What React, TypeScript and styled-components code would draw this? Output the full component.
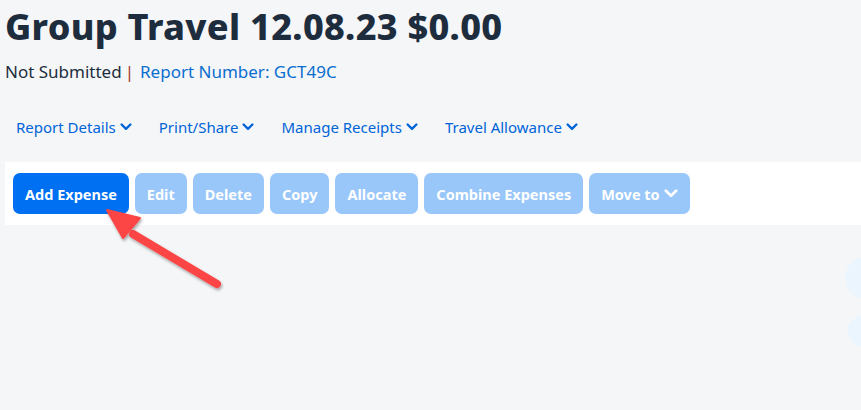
import styled, { createGlobalStyle } from 'styled-components'

const GlobalStyle = createGlobalStyle`
  html, body {
    margin: 0;
    padding: 0;
    background: #f5f6f7;
  }
  body {
    font-family: 'Noto Sans', 'Open Sans', Arial, sans-serif;
    overflow: hidden;
  }
`

const Page = styled.div`
  position: relative;
  width: 861px;
  height: 410px;
  overflow: hidden;
  background: #f5f6f7;
`

const Header = styled.div`
  padding: 4px 0 0 5px;
`

const Title = styled.h1`
  margin: 0;
  font-size: 36px;
  line-height: 46px;
  font-weight: 800;
  color: #1d2d3e;
  letter-spacing: 0.3px;
`

const StatusLine = styled.div`
  display: flex;
  align-items: center;
  margin-top: 10px;
  font-size: 17px;
  line-height: 24px;
  color: #1d2d3e;
`

const Divider = styled.span`
  color: #a0362a;
  margin: 0 6px 0 3px;
`

const ReportNumber = styled.span`
  color: #0a6ed1;
`

const NavBar = styled.nav`
  display: flex;
  gap: 27px;
  padding: 33px 0 0 16px;
`

const NavLink = styled.a`
  display: flex;
  align-items: center;
  gap: 4px;
  font-size: 15px;
  line-height: 20px;
  color: #0064d9;
  cursor: pointer;
`

const Toolbar = styled.div`
  display: flex;
  gap: 6px;
  margin: 25px 0 0 5px;
  padding: 11px 8px;
  background: #ffffff;
`

const ActionButton = styled.button<{ $primary?: boolean }>`
  display: flex;
  align-items: center;
  gap: 4px;
  height: 41px;
  padding: 0 12px;
  border: none;
  border-radius: 7px;
  font-family: inherit;
  font-size: 14.5px;
  font-weight: 700;
  color: #ffffff;
  background: ${(p) => (p.$primary ? '#0070f2' : '#99c7fa')};
  cursor: ${(p) => (p.$primary ? 'pointer' : 'default')};
`

const Bubble = styled.div<{ $top: number; $right: number; $size: number }>`
  position: absolute;
  right: ${(p) => p.$right}px;
  top: ${(p) => p.$top}px;
  width: ${(p) => p.$size}px;
  height: ${(p) => p.$size}px;
  border-radius: 50%;
  background: #eaf5fd;
`

const Arrow = styled.svg`
  position: absolute;
  left: 95px;
  top: 200px;
  overflow: visible;
`

const Chevron = ({ size = 12 }: { size?: number }) => (
  <svg width={size} height={size * 0.65} viewBox='0 0 12 8'>
    <polyline
      points='1.5,1.5 6,6 10.5,1.5'
      fill='none'
      stroke='currentColor'
      strokeWidth='2.4'
      strokeLinecap='round'
      strokeLinejoin='round'
    />
  </svg>
)

const navItems = ['Report Details', 'Print/Share', 'Manage Receipts', 'Travel Allowance']
const actions = ['Edit', 'Delete', 'Copy', 'Allocate', 'Combine Expenses']

export default function App() {
  return (
    <Page>
      <GlobalStyle />
      <Header>
        <Title>Group Travel 12.08.23 $0.00</Title>
        <StatusLine>
          Not Submitted
          <Divider>|</Divider>
          <ReportNumber>Report Number: GCT49C</ReportNumber>
        </StatusLine>
      </Header>
      <NavBar>
        {navItems.map((item) => (
          <NavLink key={item}>
            {item}
            <Chevron />
          </NavLink>
        ))}
      </NavBar>
      <Toolbar>
        <ActionButton $primary>Add Expense</ActionButton>
        {actions.map((a) => (
          <ActionButton key={a}>{a}</ActionButton>
        ))}
        <ActionButton>
          Move to
          <Chevron size={14} />
        </ActionButton>
      </Toolbar>
      <Bubble $top={257} $right={-26} $size={42} />
      <Bubble $top={315} $right={-19} $size={32} />
      <Arrow width='140' height='100' viewBox='0 0 140 100'>
        <defs>
          <filter id='shadow' x='-20%' y='-20%' width='140%' height='140%'>
            <feDropShadow dx='1' dy='2' stdDeviation='1.5' floodColor='#000' floodOpacity='0.35' />
          </filter>
        </defs>
        <g filter='url(#shadow)'>
          <line x1='38' y1='34' x2='122' y2='84' stroke='#fc4444' strokeWidth='8' strokeLinecap='round' />
          <polygon points='12,10 45,18 28,38' fill='#fc4444' stroke='#fc4444' strokeWidth='2' strokeLinejoin='round' />
        </g>
      </Arrow>
    </Page>
  )
}
